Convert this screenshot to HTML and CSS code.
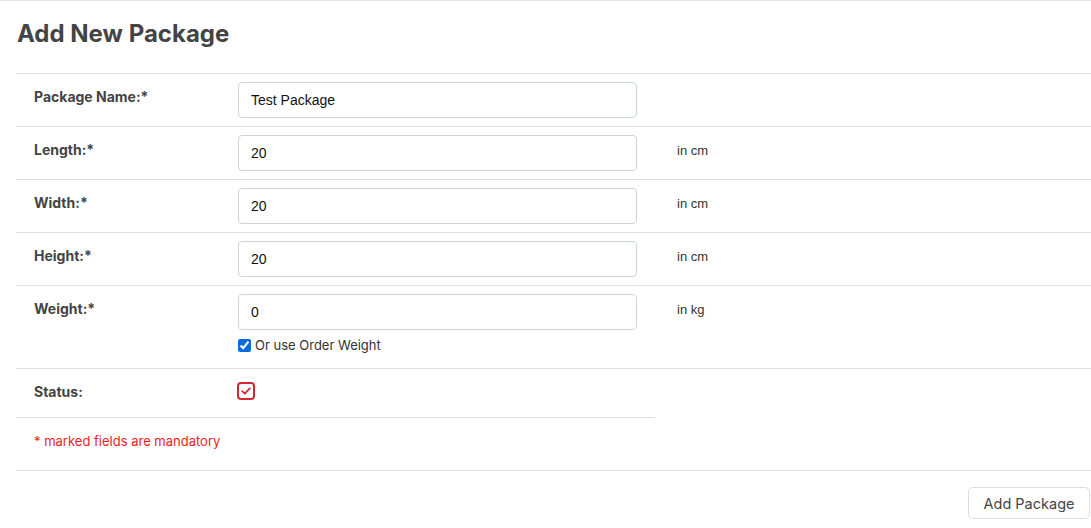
FILE: index.html
```html
<!DOCTYPE html>
<html>
<head>
<meta charset="utf-8">
<link rel="stylesheet" href="styles.css">
</head>
<body>
<div class="page">
  <h1 class="title">Add New Package</h1>
  <div class="form-table">
    <div class="row">
      <div class="cell label">Package Name:*</div>
      <div class="cell value"><input class="field" type="text" value="Test Package"></div>
      <div class="cell unit"></div>
    </div>
    <div class="row">
      <div class="cell label">Length:*</div>
      <div class="cell value"><input class="field" type="text" value="20"></div>
      <div class="cell unit">in cm</div>
    </div>
    <div class="row">
      <div class="cell label">Width:*</div>
      <div class="cell value"><input class="field" type="text" value="20"></div>
      <div class="cell unit">in cm</div>
    </div>
    <div class="row">
      <div class="cell label">Height:*</div>
      <div class="cell value"><input class="field" type="text" value="20"></div>
      <div class="cell unit">in cm</div>
    </div>
    <div class="row">
      <div class="cell label">Weight:*</div>
      <div class="cell value">
        <input class="field" type="text" value="0">
        <label class="check-line"><input class="check" type="checkbox" checked> Or use Order Weight</label>
      </div>
      <div class="cell unit">in kg</div>
    </div>
    <div class="row row-partial">
      <div class="cell label status-label">Status:</div>
      <div class="cell value status-value">
        <span class="red-check">
          <svg width="12" height="12" viewBox="0 0 12 12"><path d="M2.2 6.2 L4.8 8.6 L9.8 3.4" fill="none" stroke="#d52633" stroke-width="1.8" stroke-linecap="round" stroke-linejoin="round"/></svg>
        </span>
      </div>
    </div>
    <div class="row note-row">
      <div class="note">* marked fields are mandatory</div>
    </div>
  </div>
  <div class="actions">
    <button class="btn" type="button">Add Package</button>
  </div>
</div>
</body>
</html>
```
FILE: styles.css
```css
html, body {
  margin: 0;
  padding: 0;
  background: #fff;
}
body {
  font-family: Inter, "Noto Sans", sans-serif;
  color: #444;
  border-top: 1px solid #e2e4e8;
}
.page {
  padding-left: 16px;
}
.title {
  margin: 17px 0 23px 1px;
  font-size: 24px;
  line-height: 32px;
  font-weight: 700;
  color: #444;
}
.form-table {
  border-top: 1px solid #dee2e6;
}
.row {
  display: grid;
  grid-template-columns: 204px 435px 1fr;
  border-bottom: 1px solid #dee2e6;
}
.row-partial {
  border-bottom: none;
}
.row-partial .cell {
  border-bottom: 1px solid #dee2e6;
}
.cell {
  box-sizing: border-box;
}
.label {
  padding: 13px 0 0 18px;
  font-size: 14px;
  line-height: 20px;
  font-weight: 700;
  color: #444;
}
.value {
  padding: 8px 18px;
  display: flex;
  flex-direction: column;
}
.unit {
  padding: 14px 0 0 22px;
  font-family: "Liberation Sans", Arial, sans-serif;
  font-size: 13px;
  line-height: 20px;
  color: #333;
}
.field {
  box-sizing: border-box;
  width: 399px;
  height: 36px;
  margin: 0;
  padding: 0 12px;
  border: 1px solid #cdd3da;
  border-radius: 4px;
  font-family: "Liberation Sans", Arial, sans-serif;
  font-size: 14px;
  color: #111;
  background: #fff;
  outline: none;
}
.check-line {
  display: flex;
  align-items: center;
  margin: 5px 0 5px 0;
  font-size: 13px;
  line-height: 20px;
  color: #333;
}
.check {
  width: 13px;
  height: 13px;
  margin: 0 4px 0 0;
  accent-color: #0b6bdc;
}
.status-label {
  min-height: 49px;
}
.status-value {
  padding: 13px 18px 0 17px;
  min-height: 49px;
}
.red-check {
  box-sizing: border-box;
  width: 18px;
  height: 18px;
  border: 2px solid #d52633;
  border-radius: 4px;
  display: flex;
  align-items: center;
  justify-content: center;
}
.note-row {
  display: block;
  height: 52px;
}
.note {
  padding: 13px 0 0 18px;
  font-size: 13px;
  line-height: 20px;
  color: #f01c1c;
}
.actions {
  display: flex;
  justify-content: flex-end;
  padding: 16px 1px 0 0;
}
.btn {
  width: 122px;
  height: 32px;
  margin: 0;
  padding: 0;
  border: 1px solid #dcdde0;
  border-radius: 5px;
  background: #fff;
  font-family: Inter, "Noto Sans", sans-serif;
  font-size: 14.5px;
  color: #444;
}
```
